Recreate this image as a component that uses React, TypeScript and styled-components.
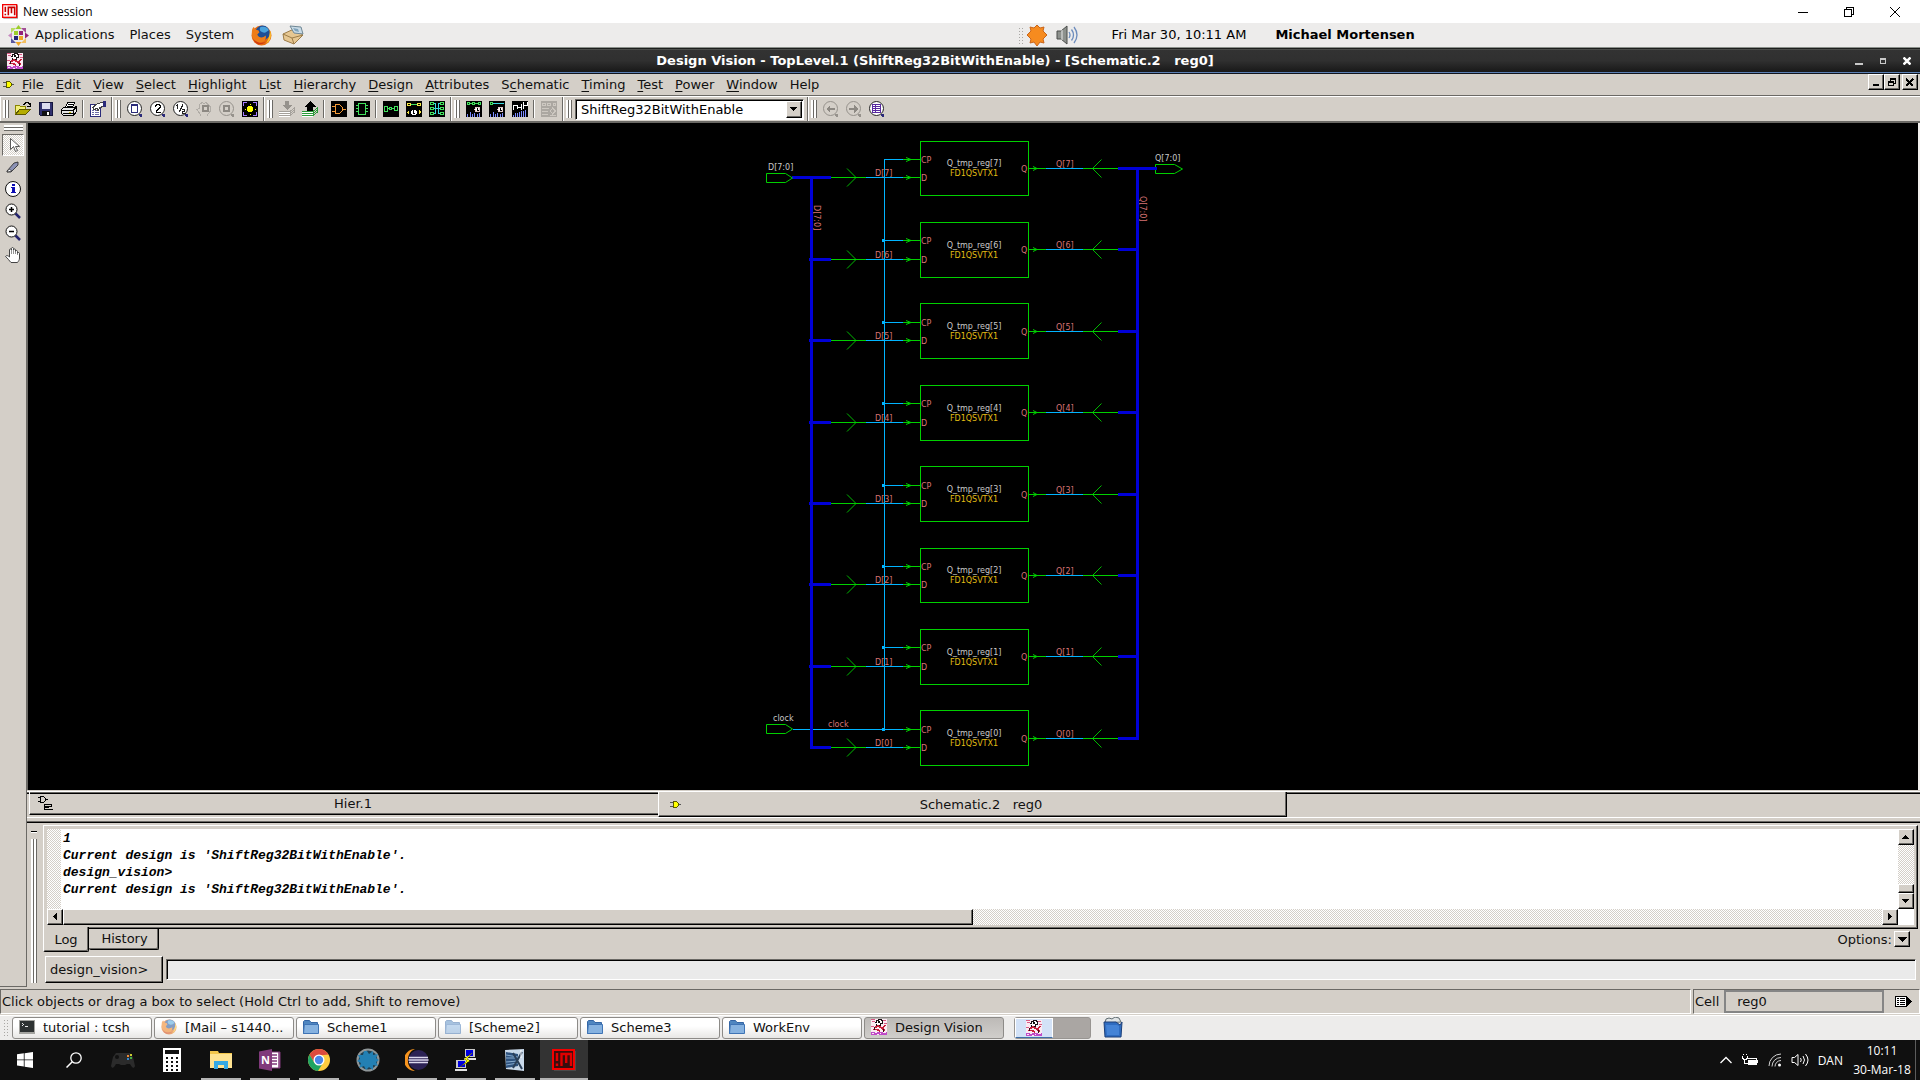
import React from "react";
import styled, { createGlobalStyle, css } from "styled-components";

/* ---------- theme values ---------- */
const face = "#d4cfc8";
const shade = "#6b6965";
const ui = `"DejaVu Sans", "Liberation Sans", sans-serif`;
const win = `"Open Sans", "Noto Sans", sans-serif`;
const dither = css`
  background: repeating-conic-gradient(#ffffff 0 25%, #d4cfc8 0 50%) 0 0 / 2px 2px;
`;
const raised = css`
  border: 1px solid;
  border-color: #fff #000 #000 #fff;
  box-shadow: inset -1px -1px ${shade};
`;

const Global = createGlobalStyle`
  *, *::before, *::after { box-sizing: border-box; }
  body { margin: 0; background: #000; overflow: hidden; }
  button, input, select { font: inherit; color: inherit; padding: 0; margin: 0; border: 0; background: none; border-radius: 0; outline: 0; }
  svg { display: block; flex: none; }
`;

const Screen = styled.div`
  display: flex;
  flex-direction: column;
  min-height: 100vh;
  font: 13px ${ui};
  color: #111;
  background: ${face};
`;

/* ---------- outer window title ---------- */
const WinTitle = styled.header`
  display: flex;
  align-items: center;
  height: 23px;
  padding: 0 2px;
  background: #fff;
  color: #000;
  font: 12px ${win};
`;
const WinName = styled.span`
  flex: 1;
  padding-left: 5px;
`;
const WinButton = styled.button`
  display: flex;
  width: 46px;
  height: 22px;
  align-items: center;
  justify-content: center;
`;

/* ---------- desktop top panel ---------- */
const TopPanel = styled.nav`
  display: grid;
  grid-template-columns: 53fr 47fr;
  height: 24px;
  background: #edeceb;
  white-space: nowrap;
`;
const PanelPart = styled.div<{ $pad?: number }>`
  display: flex;
  align-items: center;
  padding-left: ${(p) => p.$pad ?? 0}px;
`;
const PanelMenu = styled.button`
  margin-right: 15px;
  line-height: 22px;
`;
const PanelIcon = styled.button<{ $gap?: number }>`
  margin-right: ${(p) => p.$gap ?? 10}px;
`;
const Launchers = styled.div`
  display: flex;
  align-items: center;
  gap: 10px;
  padding-left: 2px;
`;
const PanelClock = styled.time`
  margin: 0 29px 0 34px;
  line-height: 22px;
  color: #000;
`;
const PanelUser = styled.strong`
  line-height: 22px;
  color: #000;
`;
const Dots = styled.span`
  width: 6px;
  height: 17px;
  background: radial-gradient(circle, #a9a7a4 0 1px, transparent 1px) 0 0 / 3px 3px;
`;

/* ---------- application title ---------- */
const AppTitle = styled.header`
  display: flex;
  align-items: center;
  height: 27px;
  padding: 0 1px 0 7px;
  border-top: 1px solid #8b918b;
  border-bottom: 1px solid #10141c;
  box-shadow: inset 0 1px #1d1f1d, inset 0 2px #4b4e4b, inset 0 -1px #5b7fb4;
  background: linear-gradient(#333 0, #303030 50%, #161616 100%);
  color: #fff;
  font-weight: bold;
`;
const AppName = styled.h1`
  flex: 1;
  margin: 0;
  font-size: 13px;
  line-height: 25px;
  text-align: center;
  white-space: pre;
`;
const FrameButton = styled.button`
  display: flex;
  justify-content: center;
  width: 24px;
`;

/* ---------- menu bar ---------- */
const MenuBar = styled.nav`
  display: flex;
  height: 22px;
  padding: 0 2px 0 3px;
  border-bottom: 1px solid ${shade};
`;
const MenuIcon = styled.span`
  width: 13px;
  padding-top: 4px;
`;
const MenuItem = styled.button`
  padding: 0 6px;
  line-height: 20px;
  u {
    text-underline-offset: 2px;
    text-decoration-thickness: 1px;
  }
`;
const MdiButtons = styled.div`
  display: flex;
  margin-left: auto;
`;
const MdiButton = styled.button<{ $gap?: number }>`
  ${raised}
  display: flex;
  align-items: center;
  justify-content: center;
  width: 16px;
  height: 16px;
  margin-left: ${(p) => p.$gap ?? 0}px;
`;

/* ---------- tool bar ---------- */
const ToolBar = styled.div`
  display: flex;
  height: 27px;
  border-top: 1px solid #fff;
  border-bottom: 2px solid ${shade};
`;
const ToolGroup = styled.div`
  display: flex;
  align-items: center;
  padding: 0 2px;
  border-left: 1px solid #fff;
  border-right: 1px solid ${shade};
  &:last-child {
    border-right: 0;
  }
`;
const Grip = styled.span`
  width: 6px;
  height: 18px;
  margin-right: 2px;
  background: linear-gradient(90deg, #fff 0 2px, ${shade} 2px 3px, #fff 3px 5px, ${shade} 5px 6px);
`;
const ToolButton = styled.button`
  display: flex;
  align-items: center;
  justify-content: center;
  width: 23px;
  height: 22px;
`;
const ToolSep = styled.span`
  width: 2px;
  height: 18px;
  margin: 0 2px;
  background: linear-gradient(90deg, ${shade} 0 1px, #fff 1px 2px);
`;
const Combo = styled.label`
  display: flex;
  width: 229px;
  height: 21px;
  margin: 0 1px;
  border: 1px solid;
  border-color: ${shade} #fff #fff ${shade};
  box-shadow: inset 1px 1px #000;
  background: #fff;
  padding: 1px;
`;
const ComboSelect = styled.select`
  appearance: none;
  flex: 1;
  padding-left: 4px;
  font-size: 13px;
  line-height: 17px;
  color: #000;
`;
const ArrowBox = styled.span`
  ${raised}
  display: flex;
  align-items: center;
  justify-content: center;
  width: 16px;
  height: 17px;
  background: ${face};
`;

/* ---------- work area ---------- */
const Work = styled.div`
  display: grid;
  grid-template-columns: 27px minmax(0, 1fr);
  flex: 1;
`;
const SideBar = styled.aside`
  display: flex;
  flex-direction: column;
  align-items: center;
  padding-top: 2px;
  border-right: 1px solid ${shade};
  border-bottom: 1px solid ${shade};
`;
const SideGrip = styled.span`
  width: 19px;
  height: 6px;
  margin-bottom: 3px;
  background: linear-gradient(#fff 0 2px, ${shade} 2px 3px, #fff 3px 5px, ${shade} 5px 6px);
`;
const SideButton = styled.button<{ $on?: boolean }>`
  display: flex;
  align-items: center;
  justify-content: center;
  width: 22px;
  height: 22px;
  ${(p) =>
    p.$on &&
    css`
      ${dither}
      border: 1px solid;
      border-color: ${shade} #fff #fff ${shade};
    `}
`;
const Main = styled.main`
  display: flex;
  flex-direction: column;
`;
const Canvas = styled.section`
  display: flex;
  flex: 1;
  align-items: center;
  justify-content: center;
  border-left: 1px solid ${shade};
  border-right: 2px solid #f2f0ee;
  background: #000;
`;
const Net = styled.svg`
  text {
    font: 8px ${ui};
  }
`;

/* ---------- document tabs ---------- */
const DocTabs = styled.div`
  display: flex;
  align-items: flex-start;
  margin-top: 1px;
  border-top: 1px solid #fff;
  border-bottom: 1px solid #fff;
  height: 27px;
  &::before {
    content: "";
    width: 2px;
    height: 2px;
    background: linear-gradient(${shade} 0 1px, #000 1px 2px);
  }
`;
const DocTab = styled.button<{ $on?: boolean }>`
  display: flex;
  align-items: center;
  width: calc((100% - 6px) / 3);
  padding: 0 6px 0 8px;
  ${(p) =>
    p.$on
      ? css`
          height: 25px;
          border-left: 1px solid #fff;
          border-right: 1px solid #000;
          border-bottom: 1px solid #000;
          box-shadow: inset -1px -1px ${shade};
          padding-left: 11px;
        `
      : css`
          height: 23px;
          border-left: 1px solid #fff;
          border-bottom: 1px solid #000;
          box-shadow: inset 0 1px ${shade}, inset 0 2px #000, inset 0 -1px ${shade};
        `}
`;
const DocName = styled.span`
  flex: 1;
  text-align: center;
  white-space: pre;
`;
const TabRest = styled.span`
  flex: 1;
  height: 2px;
  background: linear-gradient(${shade} 0 1px, #000 1px 2px);
`;
const Sash = styled.div`
  height: 5px;
  box-shadow: inset 0 -1px #000, inset 0 -2px ${shade};
`;

/* ---------- console dock ---------- */
const Dock = styled.section`
  display: flex;
  padding: 2px 2px 4px 4px;
`;
const DockGrip = styled.div`
  display: flex;
  flex-direction: column;
  width: 12px;
  padding-top: 6px;
  &::before {
    content: "";
    width: 6px;
    height: 2px;
    margin-bottom: 6px;
    background: linear-gradient(#000 0 1px, #fff 1px 2px);
  }
  &::after {
    content: "";
    width: 6px;
    flex: 1;
    background: linear-gradient(90deg, #fff 0 2px, ${shade} 2px 3px, #fff 3px 5px, ${shade} 5px 6px);
  }
`;
const DockBody = styled.div`
  flex: 1;
  min-width: 0;
`;
const LogFrame = styled.div`
  ${raised}
  padding: 3px;
  display: grid;
  grid-template-columns: minmax(0, 1fr) 16px;
  grid-template-rows: 80px 16px;
`;
const LogView = styled.div`
  display: flex;
  background: #fff;
  overflow: hidden;
`;
const Gutter = styled.span`
  width: 14px;
  ${dither}
`;
const LogText = styled.pre`
  margin: 0;
  padding: 1px 2px;
  font: italic bold 13px/17px "Liberation Mono", "DejaVu Sans Mono", monospace;
  color: #000;
`;
const Scroll = styled.div<{ $row?: boolean }>`
  display: flex;
  flex-direction: ${(p) => (p.$row ? "row" : "column")};
  justify-content: space-between;
  ${dither}
`;
const ScrollButton = styled.button`
  ${raised}
  display: flex;
  align-items: center;
  justify-content: center;
  width: 16px;
  height: 16px;
  background: ${face};
`;
const ThumbX = styled.span`
  ${raised}
  width: 50%;
  margin-right: auto;
  background: ${face};
`;
const ThumbTrack = styled.div`
  display: flex;
  flex: 1;
`;
const ThumbY = styled.span`
  ${raised}
  height: 9px;
  margin-top: auto;
  background: ${face};
`;
const Corner = styled.span`
  background: #fff;
`;
const LogTabs = styled.div`
  display: flex;
  align-items: flex-start;
  height: 23px;
`;
const LogTab = styled.button<{ $on?: boolean }>`
  background: ${face};
  border-bottom: 1px solid #000;
  border-right: 1px solid #000;
  box-shadow: inset -1px -1px ${shade};
  border-radius: 0 0 2px 2px;
  ${(p) =>
    p.$on
      ? css`
          position: relative;
          width: 46px;
          height: 25px;
          margin-top: -2px;
          border-left: 1px solid #fff;
        `
      : css`
          width: 70px;
          height: 21px;
          padding: 0 0 2px 2px;
        `}
`;
const Options = styled.label`
  display: flex;
  align-items: center;
  gap: 2px;
  margin: 2px 8px 0 auto;
`;
const Command = styled.form`
  display: flex;
  align-items: center;
  gap: 3px;
  margin: 4px 2px 0 2px;
`;
const Prompt = styled.button`
  ${raised}
  width: 118px;
  height: 27px;
  padding-left: 4px;
  text-align: left;
`;
const CommandInput = styled.input`
  flex: 1;
  height: 21px;
  padding: 0 4px;
  border: 1px solid;
  border-color: ${shade} #fff #fff ${shade};
  box-shadow: inset 1px 1px #000;
  background: #eaeaea;
`;

/* ---------- status bar ---------- */
const Status = styled.footer`
  display: flex;
  gap: 2px;
  height: 28px;
  padding: 2px 0 1px;
`;
const StatusPart = styled.div<{ $grow?: boolean }>`
  display: flex;
  align-items: center;
  flex: ${(p) => (p.$grow ? "1" : "0 0 227px")};
  padding-left: 1px;
  border: 1px solid;
  border-color: ${shade} #fff #fff ${shade};
`;
const CellBox = styled.output`
  width: 160px;
  height: 23px;
  margin: 0 11px 0 5px;
  padding-left: 11px;
  border: 2px solid #858585;
  line-height: 19px;
`;

/* ---------- desktop bottom panel ---------- */
const BottomPanel = styled.nav`
  display: flex;
  align-items: center;
  gap: 2px;
  height: 25px;
  padding: 0 3px 1px;
  border-top: 1px solid #fff;
  background: #edeceb;
  ${Dots} {
    margin-right: 1px;
  }
`;
const Task = styled.button<{ $on?: boolean }>`
  display: flex;
  align-items: center;
  gap: 8px;
  width: 140px;
  height: 22px;
  padding: 0 6px 1px;
  border: 1px solid #8d8b88;
  border-radius: 3px;
  background: ${(p) => (p.$on ? "linear-gradient(#bdbab7, #d0cecb)" : "linear-gradient(#ffffff 40%, #e8e7e5)")};
  white-space: nowrap;
`;
const Pager = styled.div`
  display: grid;
  grid-template-columns: 1fr 1fr;
  width: 77px;
  height: 22px;
  margin: 0 10px 0 8px;
  border: 1px solid #989592;
  border-radius: 3px;
  background: #aaa6a3;
`;
const PagerCell = styled.button<{ $on?: boolean }>`
  display: flex;
  align-items: center;
  justify-content: center;
  ${(p) =>
    p.$on &&
    css`
      border: 1px solid #fff;
      border-bottom-color: #3f6ea8;
      background: #d3e2f7;
    `}
`;

/* ---------- outer task bar ---------- */
const TaskBar = styled.nav`
  display: flex;
  height: 40px;
  padding-left: 1px;
  background: #101010;
  color: #fff;
  font: 12px/19px ${win};
`;
const Launch = styled.button<{ $run?: boolean; $on?: boolean }>`
  display: grid;
  grid-template-rows: 38px 2px;
  justify-items: center;
  align-items: center;
  width: 48px;
  margin-right: 1px;
  background: ${(p) => (p.$on ? "#333" : "none")};
  svg {
    margin-top: 2px;
  }
  &::after {
    content: "";
    width: ${(p) => (p.$on ? 48 : 40)}px;
    height: 2px;
    background: ${(p) => (p.$run ? "#b4b4b4" : "none")};
  }
`;
const Tray = styled.div`
  display: flex;
  align-items: center;
  gap: 9px;
  margin-left: auto;
`;
const TrayClock = styled.time`
  width: 60px;
  margin-right: 1px;
  text-align: center;
  white-space: pre-line;
`;
const ShowDesktop = styled.button`
  width: 5px;
  height: 40px;
  margin-left: -7px;
  border-left: 1px solid #5c5c5c;
`;

/* ---------- icons ---------- */
type IconProps = { w?: number; h?: number; size?: number; smooth?: boolean; children: React.ReactNode };
const Icon = ({ w = 16, h = 16, size, smooth, children }: IconProps) => (
  <svg
    width={size ?? w}
    height={size ? (size * h) / w : h}
    viewBox={`0 0 ${w} ${h}`}
    fill="none"
    shapeRendering={smooth ? "auto" : "crispEdges"}
    aria-hidden="true"
  >
    {children}
  </svg>
);

const arrowPaths = {
  up: "M0 6h7v-1h-1v-1h-1v-1h-1v-1h-1v1h-1v1h-1v1h-1z",
  down: "M0 2h7v1h-1v1h-1v1h-1v1h-1v-1h-1v-1h-1v-1h-1z",
  left: "M6 0v7h-1v-1h-1v-1h-1v-1h-1v-1h1v-1h1v-1h1v-1z",
  right: "M2 0v7h1v-1h1v-1h1v-1h1v-1h-1v-1h-1v-1h-1v-1z",
};
const Arrow = ({ d }: { d: keyof typeof arrowPaths }) => (
  <Icon w={8} h={8}>
    <path fill="#000" d={arrowPaths[d]} />
  </Icon>
);

const Moba = ({ size, dark }: { size: number; dark?: boolean }) => (
  <Icon w={24} h={22} size={size} smooth>
    <rect x="2" y="2" width="22" height="20" fill={dark ? "#4a4a4a" : "#999"} />
    <rect x="1" y="1" width="21" height="19" fill={dark ? "#3a0d0d" : "#fff"} stroke="#f40000" strokeWidth="2" />
    <path d="M5 4v8M5 14.500v2.500M9.500 17V5h9.500v12M14.200 5v9" stroke={dark ? "#e00000" : "#c80000"} strokeWidth="2.400" />
  </Icon>
);

const Gate = () => (
  <Icon w={12} h={12}>
    <path d="M0 4.500h3M0 8.500h3M9 6.500h2" stroke="#555" />
    <path d="M3 3h4v1h1v1h1v3h-1v1h-1v1h-4z" fill="#5a5a00" />
    <path d="M4 4h3v1h1v3h-1v1h-3z" fill="#ff0" />
  </Icon>
);

const Dv = () => (
  <Icon>
    <rect width="16" height="16" fill="#fbeaf2" />
    <path d="M0 13h16v3H0z" fill="#c04ac8" />
    <path d="M1 14.500h2M4 13.500h2M6 15.500h2M9 14.500h1M12 13.500h3" stroke="#fbeaf2" />
    <path d="M0 .5h4M1 2.500h3M11 1.500h4M0 7.500h3M13 4.500h3" stroke="#d85a84" />
    <path d="M4 3.500h1v-2h2v-1h3v1h1v3h-2v2H5v-2" fill="#fff" stroke="#1a1014" />
    <path d="M7 2h2v2H7z" fill="#111" />
    <path d="M3 9l4-2 4 2 3 3M12 9l2-3M2 10.500h4l3 1.500" stroke="#c8203c" strokeWidth="1.500" />
    <path d="M3 8v3M12 10v3" stroke="#3a0a14" />
  </Icon>
);

const FolderBlue = ({ pale }: { pale?: boolean }) => (
  <Icon smooth>
    <g opacity={pale ? 0.5 : 1}>
      <path d="M.5 14.500v-12l1-1h5l1.500 2h6.500v11z" fill="#4f86c0" stroke="#3465a4" />
      <path d="M.5 14.500l.8-9h14.200v9z" fill="#86b2e0" stroke="#3f74b5" />
    </g>
  </Icon>
);

const Firefox = ({ size, pale }: { size: number; pale?: boolean }) => (
  <Icon w={20} h={20} size={size} smooth>
    <g opacity={pale ? 0.55 : 1}>
      <circle cx="10" cy="10" r="9.500" fill="#e66a12" />
      <circle cx="11" cy="7.500" r="7" fill="#1f4f96" />
      <path d="M9 2c4-1 7 0 8 3-2 1-3 3-6 2s-3-3-2-5z" fill="#4ba3dc" />
      <path d="M1 5c0-1 1-3 2-3 0 2 2 3 4 3l1 2-2 2c1 3 5 4 8 1 1 4-2 7-6 7-5 0-8-5-7-12z" fill="#ef7d18" />
      <path d="M18 5c2 5 1 10-4 13 2-3 4-7 4-13z" fill="#fbc52d" />
      <path d="M2 13c3 4 8 5 12 3-4 4-10 3-12-3z" fill="#cf3a12" />
    </g>
  </Icon>
);

const Magnifier = ({ children, off }: { children: React.ReactNode; off?: boolean }) => (
  <Icon>
    <circle cx="7.500" cy="7.500" r="7" fill={off ? "none" : "#fff"} stroke={off ? "#96928c" : "#222"} shapeRendering="auto" />
    <path d="M12 13h3v3h-2" fill={off ? "#96928c" : "#2b2b7a"} />
    {children}
  </Icon>
);

const Layers = ({ off }: { off?: boolean }) => (
  <Icon>
    <path d={off ? "M6 0h4v4h3l-5 5-5-5h3z" : "M8 0l6 6h-3v4H5V6H2z"} fill={off ? "#96928c" : "#000"} />
    <path d="M0 10.500h11M0 12.500h11M0 14.500h11M11 10.500l5-4M11 12.500l5-4M11 14.500l5-4" stroke={off ? "#a5a19b" : "#2c9a3a"} />
    <path d="M0 11.500h11M0 13.500h11M0 15.500h11" stroke="#fff" />
  </Icon>
);

const Black = ({ children }: { children: React.ReactNode }) => (
  <Icon>
    <rect width="16" height="16" fill="#000" />
    {children}
  </Icon>
);

const Bars = () => <path d="M1.500 13v3M4.500 11v5M6.500 13v3M8.500 12v4M11.500 13v3M13.500 12v4" stroke="#7d8cff" />;
const Dial = () => (
  <>
    <circle cx="11.500" cy="8.500" r="2.500" fill="#fff" stroke="#e2c8c8" />
    <path d="M11.500 7v2h1" stroke="#000" />
  </>
);

const toolGroups: { name: string; art: React.ReactNode; gap?: boolean }[][] = [
  [
    {
      name: "Open",
      art: (
        <Icon>
          <path d="M.5 13.500v-9h4l1 1h5v3" fill="#f1ee7a" stroke="#8a8500" />
          <path d="M.5 13.500l4-5h11l-5 5z" fill="#b5ac00" stroke="#5b5700" />
          <path d="M8 3.500h1v-1h1v-1h3v1h1v1M15.500 2v3.500h-4" stroke="#000" />
        </Icon>
      ),
    },
    {
      name: "Save",
      art: (
        <Icon>
          <path d="M1.500 1.500h13v13h-12l-1-1z" fill="#31316f" stroke="#15153c" />
          <path d="M4 2h8v6H4z" fill="#dcdcef" />
          <path d="M4 10h8v5H4z" fill="#111" />
          <path d="M9 11h2v3H9z" fill="#fff" />
        </Icon>
      ),
    },
    {
      name: "Print",
      art: (
        <Icon>
          <path d="M4.500 6.500l2-5h7l-2 5" fill="#fff" stroke="#000" />
          <path d="M7 3.500h5M6 5.500h5" stroke="#000" />
          <path d="M.5 8.500l2-2h11l2-1v5l-3 4h-10l-2-2z" fill="#e6e6e6" stroke="#000" />
          <path d="M1 9.500h11l3-3M2 12.500h10M12.500 10v5" stroke="#000" />
          <path d="M8 11h2" stroke="#c8c800" />
        </Icon>
      ),
    },
    {
      name: "Properties",
      gap: true,
      art: (
        <Icon>
          <path d="M.5 3.500h10v12H.5z" fill="#fff" stroke="#2b2b7a" />
          <path d="M2 9.500h2M2 11.500h2M2 13.500h2M5 9.500h4M5 11.500h4M5 13.500h4" stroke="#6a6aa4" />
          <path d="M3 6.500l3-3 5-2h2v4l-3 1-2 3-1-2-3 1z" fill="#fff" stroke="#444" />
          <path d="M13 0h3v6h-3z" fill="#2b2b7a" />
        </Icon>
      ),
    },
  ],
  [
    { name: "Zoom fit", art: <Magnifier><path d="M4 3h7v9H4z" fill="#2b2b7a" /><path d="M5 5h5v6H5z" fill="#fff" /></Magnifier> },
    { name: "Zoom in 2x", art: <Magnifier><path d="M5 5.500v-1h1v-1h3v1h1v2h-1v1h-1v1h-1v1h-1v1.500h5" stroke="#000" /></Magnifier> },
    { name: "Zoom out 2x", art: <Magnifier><path d="M3 4.500h1.500V2.500v5M9.500 3v2h-1v2h-1v2h-1v2M9 8.500h2.500v2h-2v2h3" stroke="#222" /></Magnifier> },
    {
      name: "Pan selection",
      art: (
        <Icon>
          <path d="M5 14.500l-4-6 2-1v-4l2-1 1-1 2 1 2-1 2 2 2 2v5l-3 4" stroke="#b0aca6" />
          <path d="M7 5h5v5H7z" stroke="#8d8983" strokeWidth="2" />
        </Icon>
      ),
    },
    { name: "Zoom selection", art: <Magnifier off><path d="M5 5h5v5H5z" stroke="#8d8983" strokeWidth="2" /></Magnifier> },
    {
      name: "Highlight",
      art: (
        <Black>
          <path d="M1.500 5v-3.500H5M11 1.500h3.500V5M14.500 11v3.500H11M5 14.500H1.500V11" stroke="#a77dff" />
          <path d="M6 5h4v1h1v4h-1v1H6v-1H5V6h1z" fill="#ff0" />
          <path d="M8 2.500v1M8 12.500v1M2.500 8h1M12.500 8h1" stroke="#ff0" />
        </Black>
      ),
    },
  ],
  [
    { name: "Push down", art: <Layers off /> },
    { name: "Pop up", art: <Layers /> },
    {
      name: "Symbol view",
      gap: true,
      art: (
        <Black>
          <path d="M4.500 3.500h4l3 3v3l-3 3h-4zM1 5.500h3M1 10.500h3M12 8h3" stroke="#f29a38" />
        </Black>
      ),
    },
    {
      name: "Schematic view",
      art: (
        <Black>
          <path d="M4.500 2.500h7v11h-7z" stroke="#41e05c" />
          <path d="M2 4.500h2M2 7.500h2M2 10.500h2M12 4.500h2M12 7.500h2M12 10.500h2" stroke="#41e05c" />
        </Black>
      ),
    },
    {
      name: "Net view",
      gap: true,
      art: (
        <Black>
          <path d="M1.500 5.500h3v5h-3zM6.500 6.500h2v2h-2zM11.500 5.500h3v4h-3zM5 7.500h1M9 7.500h2" stroke="#41e05c" />
        </Black>
      ),
    },
    {
      name: "Timing path",
      art: (
        <Black>
          <path d="M1.500 2.500h3v2h-3zM11.500 2.500h3v2h-3z" stroke="#f4e542" />
          <path d="M5 3.500h6" stroke="#41e05c" />
          <circle cx="8" cy="11.500" r="3" fill="#fff" />
          <path d="M7.500 9v3h1" stroke="#000" />
          <path d="M1 11l2-2v5zM15 11l-2-2v5z" fill="#f4e542" />
        </Black>
      ),
    },
    {
      name: "Fan in and out",
      art: (
        <Black>
          <path d="M4 2.500h2.500v10H4M12 2.500h-2.500v10H12M4 7.500h8" stroke="#38d9e0" />
          <path d="M1.500 1.500h3v2h-3zM1.500 6.500h3v2h-3zM1.500 11.500h3v2h-3zM11.500 1.500h3v2h-3zM11.500 6.500h3v2h-3zM11.500 11.500h3v2h-3z" stroke="#41e05c" />
        </Black>
      ),
    },
  ],
  [
    {
      name: "Path slack",
      art: (
        <Black>
          <path d="M1.500 1.500h2v2h-2zM6.500 1.500h2v2h-2zM12.500 1.500h2v2h-2zM4 2.500h2M9 2.500h3" stroke="#41e05c" />
          <Bars />
          <Dial />
        </Black>
      ),
    },
    {
      name: "Endpoint slack",
      art: (
        <Black>
          <path d="M1.500 1.500h2v2h-2z" stroke="#41e05c" />
          <path d="M4 2.500h11" stroke="#38d9e0" />
          <Bars />
          <Dial />
        </Black>
      ),
    },
    {
      name: "Net capacitance",
      art: (
        <Black>
          <path d="M1.500 9V4.500h4V8M6 6.500h3M9.500 3v6M11.500 1v7M12 4.500h3V1" stroke="#fff" />
          <path d="M1.500 14v2M3.500 12v4M5.500 12v4M7.500 11v5M9.500 10v6M11.500 10v6M13.500 9v7" stroke="#7d8cff" />
        </Black>
      ),
    },
    {
      name: "Histogram",
      gap: true,
      art: (
        <Icon>
          <rect width="16" height="16" fill="#aba7a1" />
          <path d="M1.500 2.500h3v2h-3zM6.500 2.500h3v2h-3zM12.500 2.500h2v2h-2zM1 7.500h7M1 10.500h6M1 13.500h6" stroke="#cdc8c1" />
          <path d="M11.500 7l3 3-3 3-2-3zM9 14.500h6" stroke="#cdc8c1" />
        </Icon>
      ),
    },
  ],
];

const historyTools = [
  { name: "Previous view", art: <Magnifier off><path d="M3 8l4-4v3h5v2H7v3z" fill="#8d8983" /></Magnifier> },
  { name: "Next view", art: <Magnifier off><path d="M12 8L8 4v3H3v2h5v3z" fill="#8d8983" /></Magnifier> },
  {
    name: "View list",
    art: (
      <Magnifier>
        <path d="M3.500 3.500h8v8h-8z" fill="#fff" stroke="#5a2ba0" />
        <path d="M4 5.500h7M4 7.500h7M4 9.500h7M6.500 4v7" stroke="#5a2ba0" />
      </Magnifier>
    ),
  },
];

const sideTools = [
  { name: "Select", art: <Icon smooth><path d="M5.500 1.500v11l3-3 2 5 2-1-2-4h4z" fill="#fff" stroke="#333" strokeWidth=".8" /></Icon> },
  { name: "Edit", art: <Icon smooth><path d="M2 12L9 4l4-1v3l-7 7H2z" fill="#8c92b5" stroke="#222" strokeWidth=".8" /><path d="M2 13l2-3 3 2z" fill="#fff" stroke="#222" strokeWidth=".6" /></Icon> },
  { name: "Info", art: <Icon smooth><circle cx="8" cy="8" r="7.500" fill="#fff" stroke="#111" /><path d="M7 3h3v2H7zM6 6h4v5h1v1H6v-1h1V7H6z" fill="#0c0cb4" /></Icon> },
  { name: "Zoom in", art: <Icon smooth><path d="M10 10l5 5" stroke="#25256e" strokeWidth="2.500" /><circle cx="6.500" cy="6.500" r="5.500" fill="#fff" stroke="#111" /><path d="M4 6.500h5M6.500 4v5" stroke="#000" strokeWidth="1.500" /></Icon> },
  { name: "Zoom out", art: <Icon smooth><path d="M10 10l5 5" stroke="#25256e" strokeWidth="2.500" /><circle cx="6.500" cy="6.500" r="5.500" fill="#fff" stroke="#111" /><path d="M4 6.500h5" stroke="#000" strokeWidth="1.500" /></Icon> },
  { name: "Pan", art: <Icon smooth><path d="M6 15.500c-2-2-3-4-5.500-6 1-1.500 2.500-1 4 .5V3c0-1.500 2-1.500 2 0V1.500c0-1.300 2-1.300 2 0V3c0-1.500 2-1.500 2 0v1.500c0-1.300 2-1.300 2 0v2c0-1.300 2-1.300 2 0V11c0 2-1 3-2 4.500z" fill="#fff" stroke="#444" /><path d="M6.500 3v4M8.500 3v4M10.500 4v3M12.500 6v2" stroke="#777" strokeWidth=".8" /></Icon> },
];

/* ---------- schematic ---------- */
const OX = 753;
const OY = 136;
const green = "#00d000";
const wire = "#00b4ff";
const bus = "#0000d8";
const pin = "#d87474";

const Register = ({ i }: { i: number }) => {
  const at = (n: number) => Math.round(141 + (7 - i) * 81.4 + n) + 0.5;
  const top = at(-0.4);
  const bottom = at(54.3);
  const cp = at(18);
  const d = at(36.3);
  const q = at(27);
  const name = at(24.4);
  return (
    <g>
      <rect x="920.500" y={top} width="108" height={bottom - top} stroke={green} />
      {i < 7 && <path d={`M${i > 0 ? 809 : 811} ${d}h${i > 0 ? 22 : 20}M1118 ${q}h21`} stroke={bus} strokeWidth="3" />}
      {i < 7 && <rect x="882" y={cp - 1.5} width="3" height="3" fill={wire} />}
      <path d={`M831 ${d}h35M903 ${d}h17M903 ${cp}h17M1029 ${q}h17M1083 ${q}h35`} stroke={green} />
      <path d={`M866 ${d}h37M884 ${cp}h19M1046 ${q}h37`} stroke={wire} />
      <g stroke={green} shapeRendering="auto">
        <path d={`M847 ${d - 9}l9 9l-9 9M1101.500 ${q - 9}l-9 9l9 9`} strokeWidth=".9" />
        <path d={`M906 ${d - 2}l5 2l-5 2M906 ${cp - 2}l5 2l-5 2M1033 ${q - 2}l4 2l-4 2`} />
      </g>
      <text x="974" y={name} fill="#c8c8c8" textAnchor="middle">{`Q_tmp_reg[${i}]`}</text>
      <text x="974" y={name + 10} fill="#e0bc14" textAnchor="middle">FD1QSVTX1</text>
      <text x="921" y={cp + 3} fill={pin}>CP</text>
      <text x="921" y={d + 3} fill={pin}>D</text>
      <text x="1021" y={q + 3} fill={pin}>Q</text>
      <text x="875" y={d - 2} fill={pin}>{`D[${i}]`}</text>
      <text x="1056" y={q - 2} fill={pin}>{`Q[${i}]`}</text>
    </g>
  );
};

const Schematic = () => (
  <Net width="440" height="641" viewBox={`${OX} ${OY} 440 641`} fill="none" shapeRendering="crispEdges" role="img" aria-label="Schematic of reg0">
    <path d="M884.500 159V729" stroke={wire} />
    <path d="M793 729.500h91" stroke={wire} />
    {[7, 6, 5, 4, 3, 2, 1, 0].map((i) => (
      <Register key={i} i={i} />
    ))}
    <path d="M811.500 176V749M1137.500 167V740" stroke={bus} strokeWidth="3" />
    <path d="M792 177.500h39M1118 168.500h39" stroke={bus} strokeWidth="3" />
    <g stroke={green} shapeRendering="auto">
      <path d="M766.500 173.500h19l7 4.500l-7 4.500h-19zM766.500 724.500h19l7 4.500l-7 4.500h-19zM1155.500 164.500h19l8 4.500l-8 4.500h-19z" />
    </g>
    <path d="M1150 168.500h7" stroke={bus} strokeWidth="3" />
    <text x="768" y="170" fill="#c8c8c8">D[7:0]</text>
    <text x="1155" y="161" fill="#c8c8c8">Q[7:0]</text>
    <text x="773" y="721" fill="#c8c8c8">clock</text>
    <text x="828" y="727" fill={pin}>clock</text>
    <text transform="translate(814 205) rotate(90)" fill={pin}>D[7:0]</text>
    <text transform="translate(1140 196) rotate(90)" fill={pin}>Q[7:0]</text>
  </Net>
);

/* ---------- data ---------- */
const menus: [string, string, string][] = [
  ["", "F", "ile"], ["", "E", "dit"], ["", "V", "iew"], ["", "S", "elect"], ["", "H", "ighlight"],
  ["L", "i", "st"], ["", "H", "ierarchy"], ["", "D", "esign"], ["", "A", "ttributes"], ["S", "c", "hematic"],
  ["", "T", "iming"], ["", "T", "est"], ["", "P", "ower"], ["", "W", "indow"], ["Help", "", ""],
];

const tasks = [
  { name: "tutorial : tcsh", art: <Icon><rect x="0" y="1" width="16" height="14" fill="#a4a4a0" /><rect x="1" y="2" width="14" height="11" fill="#2e3232" /><path d="M3 4.500h1M4 5.500h1M3 6.500h1M6 7.500h3" stroke="#e8e8e8" /></Icon> },
  { name: "[Mail – s1440...", art: <Firefox size={16} pale /> },
  { name: "Scheme1", art: <FolderBlue /> },
  { name: "[Scheme2]", art: <FolderBlue pale /> },
  { name: "Scheme3", art: <FolderBlue /> },
  { name: "WorkEnv", art: <FolderBlue /> },
  { name: "Design Vision", art: <Dv />, on: true },
];

const launchers: { name: string; run?: boolean; on?: boolean; art: React.ReactNode }[] = [
  { name: "Start", art: <Icon w={16} h={16} smooth><path d="M0 2.300l6.800-1v6.200H0zM7.600 1.200L16 0v7.500H7.600zM0 8.300h6.800v6.300L0 13.600zM7.600 8.300H16V16l-8.400-1.200z" fill="#fff" /></Icon> },
  { name: "Search", art: <Icon smooth><circle cx="10" cy="6" r="5.200" stroke="#fff" strokeWidth="1.300" /><path d="M6.300 9.700L.5 15.500" stroke="#fff" strokeWidth="1.500" /></Icon> },
  { name: "Games", art: <Icon w={24} h={18} smooth><path d="M5 2h14l3 4 2 9c-1 3-3 2-5-2h-3l-2 1h-4l-2-1H5c-2 4-4 5-5 2l2-9z" fill="#2b2b2b" /><circle cx="6" cy="6" r="2" fill="#111" /><path d="M16 4h2v2h-2z" fill="#e83" /><path d="M19 3h2v2h-2z" fill="#cc3" /><path d="M19 6h2v2h-2z" fill="#4a4" /><path d="M16 7h2v2h-2z" fill="#38c" /></Icon> },
  { name: "Calculator", art: <Icon w={18} h={24}><rect width="18" height="24" fill="#fff" /><rect x="2" y="2" width="14" height="4" fill="#111" /><path d="M3 10h12M3 14h12M3 18h12M3 22h12" stroke="#111" strokeWidth="2" strokeDasharray="2 3" /></Icon> },
  { name: "File Explorer", run: true, art: <Icon w={22} h={20} smooth><path d="M0 1h8l1 2h13v14H0z" fill="#f3c64b" /><path d="M0 4h22v14H0z" fill="#ffe391" /><path d="M4 19v-8h14v8h-4v-4H8v4z" fill="#35a9e4" /></Icon> },
  { name: "OneNote", run: true, art: <Icon w={22} h={22} smooth><path d="M10 3h11v16H10z" fill="#fff" stroke="#80397b" /><path d="M13 6h5M13 9h5M13 12h5M13 15h5M20 3v16" stroke="#80397b" strokeWidth="1.500" /><path d="M0 2.500L13 0v22L0 19.500z" fill="#80397b" /><text x="6.500" y="15" fontSize="11" fontWeight="bold" fontFamily="Open Sans, sans-serif" fill="#fff" textAnchor="middle">N</text></Icon> },
  { name: "Chrome", run: true, art: <Icon w={22} h={22} smooth><circle cx="11" cy="11" r="11" fill="#ffcd40" /><path d="M1.500 5.500A11 11 0 0 1 20.500 5.500L11 6.500 6.500 14z" fill="#dd4b3e" /><path d="M1.500 5.500A11 11 0 0 0 10 22l5.500-9-9 1z" fill="#1fa463" /><circle cx="11" cy="11" r="5.500" fill="#fff" /><circle cx="11" cy="11" r="4.200" fill="#4a86e8" /></Icon> },
  { name: "Settings tool", art: <Icon w={24} h={24} smooth><circle cx="12" cy="12" r="11.500" fill="#8f9698" /><circle cx="12" cy="12" r="9.500" fill="#1d3f52" /><path d="M11 3l2 3 4-3v4l5-1-2 4 3 2-3 2 2 4-5-1 0 5-4-3-3 3-2-4-5 2 2-5-4-2 3-2-2-4 5 0 1-4z" fill="#2380b4" /></Icon> },
  { name: "Eclipse", run: true, art: <Icon w={24} h={22} smooth><path d="M10 0a11 11 0 0 0 0 22A12 12 0 0 1 10 0z" fill="#f7941e" /><circle cx="13.500" cy="11" r="10" fill="#2c2255" /><path d="M4 8.500h19M3.500 11h20M4 13.500h19" stroke="#dcd8ee" strokeWidth="1.300" /></Icon> },
  {
    name: "PuTTY",
    run: true,
    art: (
      <Icon w={22} h={22}>
        <path d="M10 0h10v8H10zM1 11h10v8H1z" fill="#c8c8c8" />
        <path d="M11 1h7v6h-7zM3 12h7v6H3z" fill="#0000e0" />
        <path d="M9 9h12v2H9zM0 20h12v2H0z" fill="#e4e4e4" />
        <path d="M17 4l-8 6 3 2-7 6 10-6-3-2z" fill="#ff0" stroke="#555500" strokeWidth=".5" />
      </Icon>
    ),
  },
  { name: "X Server", run: true, art: <Icon w={20} h={22} smooth><path d="M0 1l19-1v22L1 20z" fill="#c9d9ea" /><path d="M1 3l12 2v12L1 19z" fill="#2e527e" /><path d="M1 6l12 2M1 9h12M1 13l12-1M1 16l12-2" stroke="#86aacd" /><path d="M8 4l9 16M17 3L8 19" stroke="#2a3f58" strokeWidth="2" /><path d="M16 1v8" stroke="#fff" /></Icon> },
  { name: "MobaXterm", run: true, on: true, art: <Moba size={24} dark /> },
];

export default function App() {
  return (
    <Screen>
      <Global />
      <WinTitle>
        <Moba size={16} />
        <WinName>New session</WinName>
        <WinButton aria-label="Minimise"><Icon w={10} h={10}><path d="M0 5.500h10" stroke="#000" /></Icon></WinButton>
        <WinButton aria-label="Restore"><Icon w={10} h={10}><path d="M.5 2.500h7v7h-7zM2.500 2.500v-2h7v7h-2" stroke="#000" /></Icon></WinButton>
        <WinButton aria-label="Close"><Icon w={10} h={10} smooth><path d="M0 0l10 10M10 0L0 10" stroke="#000" /></Icon></WinButton>
      </WinTitle>

      <TopPanel>
        <PanelPart $pad={8}>
          <PanelIcon $gap={6} aria-label="Desktop menu">
            <Icon w={21} h={21} smooth>
              <path d="M6 6h4v4H6z" fill="#9ccd2a" /><path d="M11 6h4v4h-4z" fill="#932279" /><path d="M6 11h4v4H6z" fill="#262577" /><path d="M11 11h4v4h-4z" fill="#efa724" />
              <path d="M10.500 0l3 4h-6z" fill="#9ccd2a" /><path d="M21 10.500l-4-3v6z" fill="#932279" /><path d="M0 10.500l4-3v6z" fill="#c78ac0" /><path d="M10.500 21l3-4h-6z" fill="#efa724" />
              <path d="M3 3h5L3 8z" fill="#b9dc60" /><path d="M18 3v5l-5-5z" fill="#a44f95" /><path d="M3 18v-5l5 5z" fill="#5a59a0" /><path d="M18 18h-5l5-5z" fill="#f3c060" />
            </Icon>
          </PanelIcon>
          <PanelMenu>Applications</PanelMenu>
          <PanelMenu>Places</PanelMenu>
          <PanelMenu>System</PanelMenu>
          <Launchers>
            <button aria-label="Firefox"><Firefox size={21} /></button>
            <button aria-label="Mail">
              <Icon w={22} h={20} smooth>
                <path d="M1 9l11-5 9 6-9 9-10-4z" fill="#e6c792" stroke="#9c7c48" />
                <path d="M1 9l9 4 11-3M10 13l2 6" stroke="#9c7c48" />
                <path d="M8 1l11 1 2 7-9-1z" fill="#c9dbe6" stroke="#6f8795" />
                <path d="M11 3l5 1 1 3-4-1z" fill="#7fa3bb" />
              </Icon>
            </button>
          </Launchers>
        </PanelPart>
        <PanelPart>
          <Dots />
          <PanelIcon $gap={8} aria-label="Updates">
            <Icon w={24} h={22} smooth>
              <path d="M13 1l3 3 4-1-1 4 4 4-4 4 1 4-4-1-3 4-3-4-4 1 1-4-4-4 4-4-1-4 4 1z" fill="#f68b1f" stroke="#c9651a" />
            </Icon>
          </PanelIcon>
          <PanelIcon $gap={0} aria-label="Volume">
            <Icon w={22} h={20} smooth>
              <path d="M1 6h4l6-5v18l-6-5H1z" fill="#8d918d" stroke="#4a4d4a" />
              <path d="M6 5v10" stroke="#e8e8e8" /><path d="M13 7q2 3 0 6M15.500 4.500q4 5.500 0 11M18 2q6 8 0 16" stroke="#6c8cbc" strokeWidth="1.300" />
            </Icon>
          </PanelIcon>
          <PanelClock>Fri Mar 30, 10:11 AM</PanelClock>
          <PanelUser>Michael Mortensen</PanelUser>
        </PanelPart>
      </TopPanel>

      <AppTitle>
        <Dv />
        <AppName>{"Design Vision - TopLevel.1 (ShiftReg32BitWithEnable) - [Schematic.2   reg0]"}</AppName>
        <FrameButton aria-label="Minimise window"><Icon w={8} h={8}><path d="M0 7h8" stroke="#c8c8c8" strokeWidth="2" /></Icon></FrameButton>
        <FrameButton aria-label="Maximise window"><Icon w={7} h={8}><path d="M0 1h6v6H0z" fill="#c8c8c8" /><path d="M1 3h4v3H1z" fill="#303030" /></Icon></FrameButton>
        <FrameButton aria-label="Close window"><Icon w={8} h={8} smooth><path d="M.5.5l7 7M7.500.5l-7 7" stroke="#fff" strokeWidth="2.500" /></Icon></FrameButton>
      </AppTitle>

      <MenuBar>
        <MenuIcon><Gate /></MenuIcon>
        {menus.map(([a, u, b]) => (
          <MenuItem key={a + u + b}>{a}{u && <u>{u}</u>}{b}</MenuItem>
        ))}
        <MdiButtons>
          <MdiButton aria-label="Minimise schematic"><Icon w={8} h={8}><path d="M1 7h6" stroke="#000" strokeWidth="2" /></Icon></MdiButton>
          <MdiButton aria-label="Restore schematic"><Icon w={8} h={8}><path d="M.5 3.500h5v4h-5zM2.500 3V.5h5v5H6M0 4h6M2 1h6" stroke="#000" /></Icon></MdiButton>
          <MdiButton $gap={2} aria-label="Close schematic"><Icon w={8} h={8}><path d="M0 1l7 7M7 1L0 8" stroke="#000" strokeWidth="1.500" /></Icon></MdiButton>
        </MdiButtons>
      </MenuBar>

      <ToolBar>
        {toolGroups.map((group, g) => (
          <ToolGroup key={g}>
            <Grip />
            {group.map((t) => (
              <React.Fragment key={t.name}>
                {t.gap && <ToolSep />}
                <ToolButton aria-label={t.name}>{t.art}</ToolButton>
              </React.Fragment>
            ))}
          </ToolGroup>
        ))}
        <ToolGroup>
          <Grip />
          <Combo>
            <ComboSelect aria-label="Design">
              <option>ShiftReg32BitWithEnable</option>
            </ComboSelect>
            <ArrowBox><Arrow d="down" /></ArrowBox>
          </Combo>
        </ToolGroup>
        <ToolGroup>
          <Grip />
          {historyTools.map((t) => (
            <ToolButton key={t.name} aria-label={t.name}>{t.art}</ToolButton>
          ))}
        </ToolGroup>
      </ToolBar>

      <Work>
        <SideBar>
          <SideGrip />
          {sideTools.map((t, i) => (
            <SideButton key={t.name} $on={i === 0} aria-label={t.name}>{t.art}</SideButton>
          ))}
        </SideBar>
        <Main>
          <Canvas>
            <Schematic />
          </Canvas>
          <DocTabs role="tablist">
            <DocTab role="tab" aria-selected="false">
              <Icon>
                <path d="M0 2.500h2M0 6.500h2M2.500 1.500h3l2 2v2l-2 2h-3zM8 4.500h2" stroke="#000" />
                <path d="M6.500 9v5.500H15M7 9.500h6v2H7M7 12.500h4" stroke="#000" />
              </Icon>
              <DocName>Hier.1</DocName>
            </DocTab>
            <DocTab role="tab" aria-selected="true" $on>
              <Gate />
              <DocName>{"Schematic.2   reg0"}</DocName>
            </DocTab>
            <TabRest />
          </DocTabs>
          <Sash />
          <Dock>
            <DockGrip />
            <DockBody>
              <LogFrame>
                <LogView>
                  <Gutter />
                  <LogText>{`1
Current design is 'ShiftReg32BitWithEnable'.
design_vision>
Current design is 'ShiftReg32BitWithEnable'.`}</LogText>
                </LogView>
                <Scroll>
                  <ScrollButton aria-label="Scroll up"><Arrow d="up" /></ScrollButton>
                  <ThumbY />
                  <ScrollButton aria-label="Scroll down"><Arrow d="down" /></ScrollButton>
                </Scroll>
                <Scroll $row>
                  <ScrollButton aria-label="Scroll left"><Arrow d="left" /></ScrollButton>
                  <ThumbTrack><ThumbX /></ThumbTrack>
                  <ScrollButton aria-label="Scroll right"><Arrow d="right" /></ScrollButton>
                </Scroll>
                <Corner />
              </LogFrame>
              <LogTabs role="tablist">
                <LogTab role="tab" $on>Log</LogTab>
                <LogTab role="tab">History</LogTab>
                <Options>
                  Options:
                  <ScrollButton aria-label="Options"><Icon w={9} h={8}><path d="M0 2h9v1h-1v1h-1v1h-1v1h-1v1h-1v-1h-1v-1h-1v-1h-1v-1h-1z" fill="#000" /></Icon></ScrollButton>
                </Options>
              </LogTabs>
              <Command>
                <Prompt type="button">design_vision&gt;</Prompt>
                <CommandInput type="text" aria-label="Command" />
              </Command>
            </DockBody>
          </Dock>
        </Main>
      </Work>

      <Status>
        <StatusPart $grow>Click objects or drag a box to select (Hold Ctrl to add, Shift to remove)</StatusPart>
        <StatusPart>
          <label htmlFor="cell">Cell</label>
          <CellBox id="cell">reg0</CellBox>
          <Icon w={17} h={12}>
            <rect x=".5" y=".5" width="11" height="10" fill="#fff" stroke="#000" />
            <path d="M2 2.500h2M5 2.500h5M2 4.500h2M5 4.500h5M2 6.500h2M5 6.500h5M2 8.500h2M5 8.500h5" stroke="#000" />
            <path d="M12 1l5 4.500-5 4.500z" fill="#000" />
          </Icon>
        </StatusPart>
      </Status>

      <BottomPanel>
        <Dots />
        {tasks.map((t) => (
          <Task key={t.name} $on={t.on}>{t.art}{t.name}</Task>
        ))}
        <Pager>
          <PagerCell $on aria-label="Workspace 1"><Dv /></PagerCell>
          <PagerCell aria-label="Workspace 2" />
        </Pager>
        <PanelIcon aria-label="Trash">
          <Icon w={20} h={21} smooth>
            <path d="M2 6l1-4 3-1 3 1 3-2 4 1 2 4z" fill="#dfe4e6" stroke="#5f6b70" />
            <path d="M1 5h12l4 3 2-3-1 15H2z" fill="#2f6cc0" stroke="#1c3f78" />
            <path d="M3 8h11l2 1v9H4z" fill="#4483d6" />
          </Icon>
        </PanelIcon>
      </BottomPanel>

      <TaskBar>
        {launchers.map((l) => (
          <Launch key={l.name} $run={l.run} $on={l.on} aria-label={l.name}>{l.art}</Launch>
        ))}
        <Tray>
          <Icon w={12} h={8} smooth><path d="M.5 7l5.500-5.500L11.500 7" stroke="#fff" strokeWidth="1.300" /></Icon>
          <Icon w={18} h={14}><path d="M5 5.500h10.500v6H7M16.500 7v3" stroke="#fff" /><path d="M7 7h8v4H7z" fill="#fff" /><path d="M2 1.500h1M5 1.500h1M1.500 3v2h1v1h3v-1h1v-2M3.500 6v4.500h3" stroke="#fff" /></Icon>
          <Icon w={14} h={14} smooth><path d="M1 13A12 12 0 0 1 13 1M4 13.500A9 9 0 0 1 13 4.500M7 13.500A6 6 0 0 1 13 7.500" stroke="#d0d0d0" /><circle cx="11.500" cy="12" r="1.500" fill="#fff" /></Icon>
          <Icon w={18} h={14} smooth><path d="M1 4.500h2.500L7 1.500v11L3.500 9.500H1z" stroke="#fff" /><path d="M9.500 5q1.500 2 0 4M12 3q3 4 0 8M14.500 1q5 6 0 12" stroke="#fff" /></Icon>
          <span>DAN</span>
          <TrayClock>{"10:11\n30-Mar-18"}</TrayClock>
          <ShowDesktop aria-label="Show desktop" />
        </Tray>
      </TaskBar>
    </Screen>
  );
}
